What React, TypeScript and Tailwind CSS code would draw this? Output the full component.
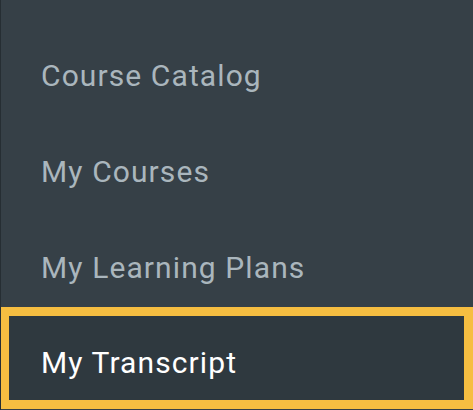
const items = ['Course Catalog', 'My Courses', 'My Learning Plans'];

export default function App() {
  return (
    <div
      className="h-[410px] w-[473px] overflow-hidden border-l border-[#262e33] bg-[#364047] pt-[27px]"
      style={{ fontFamily: 'Roboto, "Noto Sans", sans-serif' }}
    >
      <nav className="flex flex-col">
        {items.map(label => (
          <a key={label} className="flex h-24 items-center px-10 text-[30px] tracking-[1.1px] text-[#aab6bd]">
            {label}
          </a>
        ))}
        <a className="-ml-px -mt-2 flex h-[102px] items-center border-[9px] border-[#f6be41] bg-[#2f393f] px-8 pt-[9px] text-[30px] tracking-[1.1px] text-white">
          My Transcript
        </a>
      </nav>
    </div>
  );
}
